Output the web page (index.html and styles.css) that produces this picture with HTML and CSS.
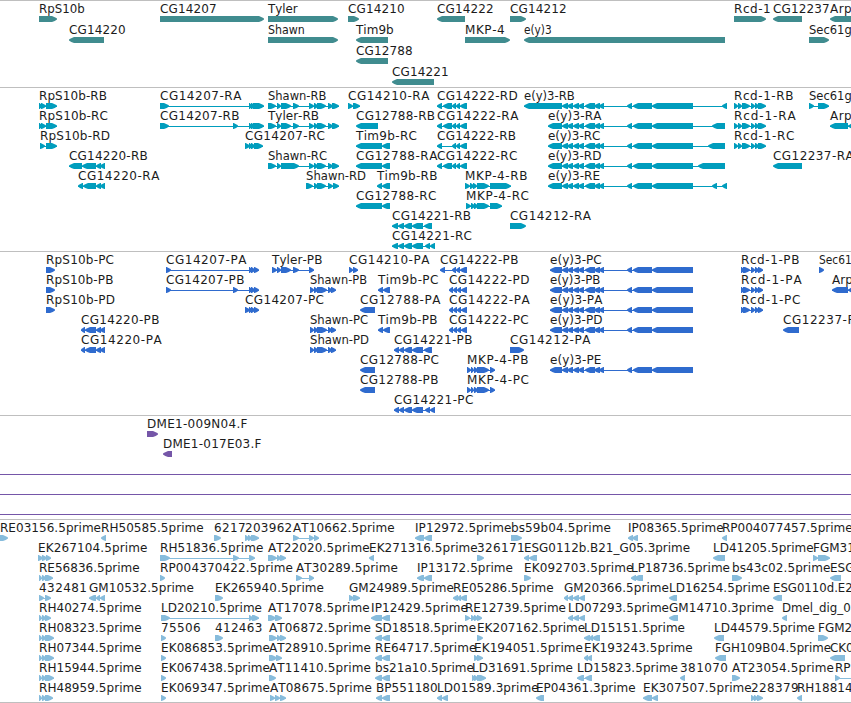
FILE: index.html
```
<!DOCTYPE html>
<html lang="en">
<head>
<meta charset="utf-8">
<title>Genome tracks</title>
<link rel="stylesheet" href="styles.css">
</head>
<body>
<main class="browser">
<section class="track genes" data-track="genes" data-pitch="21"><svg class="canvas"></svg></section>
<section class="track transcripts" data-track="transcripts" data-pitch="20"><svg class="canvas"></svg></section>
<section class="track proteins" data-track="proteins" data-pitch="20"><svg class="canvas"></svg></section>
<section class="track clones" data-track="clones" data-pitch="20"><svg class="canvas"></svg></section>
<section class="track ests" data-track="ests" data-pitch="20"><svg class="canvas"></svg></section>
</main>
<script src="tracks.js"></script>
</body>
</html>
```
FILE: styles.css
```
* { box-sizing: border-box; }
body { margin: 0; background: #fff; overflow: hidden; }
.browser { display: flex; flex-direction: column; width: 851px; height: 703px; border-bottom: 1px solid #bfbfbf; }
.track { flex: none; border-top: 1px solid #bfbfbf; overflow: hidden; }
.canvas { display: block; width: 100%; height: 100%; }
.canvas text { font: 12px "DejaVu Sans", sans-serif; fill: #1c1c1c; font-kerning: none; }
.genes { height: 87px; color: #408c8f; }
.transcripts { height: 164px; color: #009dbd; }
.proteins { height: 164px; color: #2f6bce; }
.clones { height: 104px; color: #7556a8; }
.ests { height: 183px; color: #87bcdc; }
.exon { fill: currentColor; }
.intron { fill: currentColor; shape-rendering: crispEdges; }
```
FILE: tracks.js
```
// Each line: row | label | label end | strand | exon ranges
const TAIL = '562-568 567-573 573-579 578-584 585-595 594-600 599-604 627-632 633-652 652-693';
const SH = '309-314 314-318 317-326 328-333 332-339';
const DATA = {
genes: `
0|RpS10b|84|>|39-57
0|CG14207|216|>|160-264
0|Tyler|297|>|268-338
0|CG14210|404|>|348-359
0|CG14222|493|<|437-465
0|CG14212|566|>|510-526
0|Rcd-1|770|>|734-766
0|CG12237|829|<|773-802
0|Arp|851|<|830-870
1|CG14220|125|<|69-104
1|Shawn|304|>|268-338
1|Tim9b|393|<|356-388
1|MKP-4|504|>|465-510
1|e(y)3|551|<|524-725
1|Sec61g|851|>|809-829
2|CG12788|412|<|356-388
3|CG14221|448|<|392-434`,
transcripts: `
0|RpS10b-RB|106.3|>|39-42 41-46 46-57
1|RpS10b-RC|107.3|>|39-42 41-46 46-57
2|RpS10b-RD|109.3|>|40-45 46-57
3|CG14220-RB|147|<|69-82 82-96 96-101 100-105
4|CG14220-RA|158.7|<|78-83 83-96 96-101 100-105
0|CG14207-RA|240.7|>|160-169 249-252 251-255 253-264
1|CG14207-RB|238.7|>|160-169 233-238 249-252 251-255 253-264
2|CG14207-RC|324.3|>|245-250 249-252 251-255 254-263
0|Shawn-RB|325.7|>|268-276 277-281 281-291 293-299 ${SH}
1|Tyler-RB|318.3|>|268-276 277-281 281-291 293-299 ${SH}
3|Shawn-RC|326.3|>|268-276 277-281 281-299 ${SH}
4|Shawn-RD|365.3|>|306-313 314-318 317-326 328-333 333-339
0|CG14210-RA|428.7|>|348-353 353-360
1|CG12788-RB|434.3|<|356-378
2|Tim9b-RC|416.3|<|356-382 382-390
3|CG12788-RA|436.7|<|356-382 382-390
4|Tim9b-RB|436.7|<|377-382 382-390
5|CG12788-RC|435.7|<|356-382 382-390
6|CG14221-RB|470.3|<|392-398 398-404 404-412 412-423 424-432
7|CG14221-RC|471.3|<|392-398 398-404 404-412 412-423 425-430 430-435
0|CG14222-RD|517|<|437-442 443-452 452-456 456-460 460-467
1|CG14222-RA|517.7|<|437-442 443-452 452-456 456-460 460-467
2|CG14222-RB|515.3|<|437-442 452-456 456-460 460-467
3|CG14222-RC|516.7|<|437-442 443-452 452-456 456-460 460-467
4|MKP-4-RB|526.7|>|465-470 470-474 473-477 477-489 490-511
5|MKP-4-RC|528.3|>|466-471 471-475 474-478 477-489 490-502
6|CG14212-RA|590.3|>|510-526
0|e(y)3-RB|574|<|524-562 ${TAIL} 722-727
1|e(y)3-RA|600.7|<|548-562 ${TAIL} 712-725
2|e(y)3-RC|599.7|<|548-562 ${TAIL} 708-725
3|e(y)3-RD|600.7|<|548-562 ${TAIL} 698-725
4|e(y)3-RE|599.3|<|548-562 ${TAIL} 712-717 722-727
0|Rcd-1-RB|792.7|>|734-738 738-742 742-750 751-755 755-759 758-766
1|Rcd-1-RA|795|>|734-738 738-742 742-750 751-755 755-759 758-766
2|Rcd-1-RC|793.7|>|734-738 738-742 742-750 751-755 755-759 758-766
0|Sec61g|851|>|809-814 818-829
1|Arp|851|<|830-848 848-856
3|CG12237-RA|853|<|773-802`,
proteins: `
0|RpS10b-PC|113.3|>|46-55
1|RpS10b-PB|112.7|>|46-55
2|RpS10b-PD|114.3|>|46-55
3|CG14220-PB|158.7|<|81-85 85-96 96-101 100-105
4|CG14220-PA|161|<|81-85 85-96 96-101 100-105
0|CG14207-PA|245.7|>|166-171 249-252 251-255 254-259
1|CG14207-PB|243.7|>|166-171 233-238 249-252 251-255 254-259
2|CG14207-PC|323.3|>|245-250 249-252 251-255 254-259
0|Tyler-PB|321.7|>|272-277 277-281 281-291 293-299 309-314
1|Shawn-PB|366.3|>|310-314 314-318 317-327 328-332 331-336
3|Shawn-PC|367.3|>|310-314 314-318 317-327 328-332 331-336
4|Shawn-PD|368.3|>|310-314 314-318 317-327 328-332 331-336
0|CG14210-PA|428.7|>|349-353 353-358
1|Tim9b-PC|437.7|<|378-383 383-390
3|Tim9b-PB|436.7|<|378-383 383-390
2|CG12788-PA|439.7|<|360-375
5|CG12788-PC|438.3|<|360-375
6|CG12788-PB|437.7|<|360-375
4|CG14221-PB|471.7|<|394-399 399-404 404-412 412-423 424-432
7|CG14221-PC|472.7|<|394-399 399-404 404-412 412-423 425-430 430-435
0|CG14222-PB|517.7|<|440-445 452-456 456-460 460-467
1|CG14222-PD|528.7|<|449-453 453-457 457-461 461-467
2|CG14222-PA|529|<|449-453 453-457 457-461 461-467
3|CG14222-PC|528|<|449-453 453-457 457-461 461-467
4|CG14212-PA|589.7|>|510-524
5|MKP-4-PB|527.7|>|467-471 471-474 474-478 477-489 490-495
6|MKP-4-PC|528.3|>|467-471 471-474 474-478 477-489 490-495
0|e(y)3-PC|601|<|550-562 ${TAIL}
1|e(y)3-PB|599.7|<|550-562 ${TAIL}
2|e(y)3-PA|601.7|<|550-562 ${TAIL}
3|e(y)3-PD|601.7|<|550-562 ${TAIL}
5|e(y)3-PE|600.7|<|550-562 ${TAIL}
0|Rcd-1-PB|798.7|>|741-744 743-750 751-755 755-759 758-763
1|Rcd-1-PA|801|>|741-744 743-750 751-755 755-759 758-763
2|Rcd-1-PC|799.7|>|741-744 743-750 751-755 755-759 758-763
0|Sec61|851|>|819-824
1|Arp||<|832-848 848-856
3|CG12237-P|854|<|783-799`,
clones: `
0|DME1-009N04.F|246.7|>|147-158
1|DME1-017E03.F|260.7|<|163-172`,
ests: `
0|RE03156.5prime|100.3|>|0-8
0|RH50585.5prime|203|<|101-106
0|6217|245|>|214-221
0|203962|291.5|>|245-249 248-252 251-259
0|AT10662.5prime|394|>|293-299 309-314 314-319
0|IP12972.5prime|510.7|<|415-424 424-432
0|bs59b04.5prime|610.3|>|511-522
0|IP08365.5prime|723|<|628-633 632-638
0|RP004077457.5prime|852|<|722-727
1|EK267104.5prime|146.7|>|38-43 42-47 46-51
1|RH51836.5prime|262.7|>|160-170 233-239 249-255
1|AT22020.5prime|369|>|268-277 277-281 280-286
1|EK271316.5prime|477|<|369-374
1|326171|524|>|477-484
1|ESG0112b.B21_G05.3prime|689.3|<|524-529 529-537
1|LD41205.5prime|813|<|713-725
1|FGM31||>|813-818 818-830
2|RE56836.5prime|139|>|39-42 42-46 45-53
2|RP004370422.5prime|292.3|>|160-165
2|AT30289.5prime|397.3|>|296-302 309-314
2|IP13172.5prime|512.3|<|417-424 424-432
2|EK092703.5prime|632.7|>|524-531
2|LP18736.5prime|729.3|<|631-636 634-643
2|bs43c02.5prime|829.7|>|732-742
2|ESG||<|830-841
3|432481|86.3|>|39-44 45-51
3|GM10532.5prime|193.3|<|89-96 96-100 100-105
3|EK265940.5prime|323.3|>|215-223
3|GM24989.5prime|453.3|>|349-354 353-360
3|RE05286.5prime|553|<|453-458 457-461 460-467
3|GM20366.5prime|668.3|<|564-568 568-573 573-579 579-585
3|LD16254.5prime|769.3|<|669-677
3|ESG0110d.E2|852|<|773-782
4|RH40274.5prime|141|>|39-42 42-46 45-51
4|LD20210.5prime|261.3|>|161-170 249-253 252-259
4|AT17078.5prime|369|>|268-276 275-282
4|IP12429.5prime|467.3|<|371-382 382-390
4|RE12739.5prime|565.3|>|465-470 471-475 474-478 477-482
4|LD07293.5prime|668.3|<|568-573 573-579 579-585
4|GM14710.3prime|773.3|<|669-678
4|Dmel_dig_0|850|<|782-787
5|RH08323.5prime|141|>|39-42 42-46 45-54
5|75506|200|>|161-166
5|412463|261.7|>|215-223
5|AT06872.5prime|370.3|>|269-277 277-281 280-286
5|SD18518.5prime|475.3|<|375-382 382-390
5|EK207162.5prime|584.5|>|477-483
5|LD15151.5prime|684.3|<|584-590 589-593 592-600
5|LD44579.5prime|814.3|<|714-724
5|FGM2||>|818-828
6|RH07344.5prime|141|>|39-42 42-46 45-54
6|EK086853.5prime|269.3|>|161-166
6|AT28910.5prime|370.3|>|269-277 276-282
6|RE64717.5prime|475.7|<|375-382 382-390
6|EK194051.5prime|582.3|>|474-478 477-483
6|EK193243.5prime|692|<|584-588 587-592
6|FGH109B04.5prime|830.3|<|715-726
6|CK0|853|<|830-845
7|RH15944.5prime|141|>|39-42 42-46 45-54
7|EK067438.5prime|269.3|>|161-166
7|AT11410.5prime|370.3|>|269-276
7|bs21a10.5prime|473.3|<|375-382 382-390
7|LD31691.5prime|572.3|>|472-475 474-478 477-486
7|LD15823.5prime|677.3|<|577-584 585-592
7|381070|727.3|<|680-685
7|AT23054.5prime|833.3|>|732-740
7|RP||>|835-840 860-865
8|RH48959.5prime|141|>|39-42 42-46 45-53
8|EK069347.5prime|269.3|>|161-166
8|AT08675.5prime|371.3|>|270-275 275-280 280-286
8|BP551180|437|<|376-382 382-390
8|LD01589.3prime|538|<|437-442 442-448
8|EP04361.3prime|635|<|536-544
8|EK307507.5prime|751|<|643-652 652-658
8|228379|798|>|751-755 754-758 757-763
8|RH18814||<|797-802`
};

function add(svg, tag, attrs) {
  const el = document.createElementNS('http://www.w3.org/2000/svg', tag);
  for (const k in attrs) el.setAttribute(k, attrs[k]);
  svg.appendChild(el);
  return el;
}

// An exon is a bar whose end points along the strand, with a slightly bulging head
function exon(s, e, dir, y) {
  const h = Math.min(5, e - s - 0.7);
  const sign = dir === '>' ? 1 : -1;
  const tail = dir === '>' ? s : e;
  const tip = dir === '>' ? e : s;
  const neck = tip - sign * h;
  const mid = tip - sign * h * 0.45;
  return `M${tail} ${y}H${neck}L${mid} ${y + 1.2}L${tip} ${y + 2.5}V${y + 3.6}L${mid} ${y + 4.9}L${neck} ${y + 6}H${tail}Z`;
}

for (const track of document.querySelectorAll('.track')) {
  const svg = track.querySelector('svg');
  const pitch = Number(track.dataset.pitch);
  for (const line of DATA[track.dataset.track].trim().split('\n')) {
    const [row, label, right, dir, ranges] = line.split('|');
    const segs = ranges.split(' ').map(r => r.split('-').map(Number));
    const top = row * pitch;
    const x = segs[0][0];
    if (segs.length > 1) {
      add(svg, 'rect', { class: 'intron', x: x, y: top + 18, width: segs[segs.length - 1][1] - x, height: 1 });
    }
    for (const s of segs) add(svg, 'path', { class: 'exon', d: exon(s[0], s[1], dir, top + 15) });
    const text = add(svg, 'text', { x: x, y: top + 12 });
    text.textContent = label;
    if (right) {
      const width = right - x + 0.7;
      // Labels that must shrink are condensed instead of tightly tracked
      if (width < text.getComputedTextLength()) text.setAttribute('lengthAdjust', 'spacingAndGlyphs');
      text.setAttribute('textLength', width.toFixed(1));
    }
  }
  if (track.dataset.track === 'clones') {
    for (const y of [58, 78, 98]) add(svg, 'rect', { class: 'intron', x: 0, y: y, width: 851, height: 1 });
  }
}
```
